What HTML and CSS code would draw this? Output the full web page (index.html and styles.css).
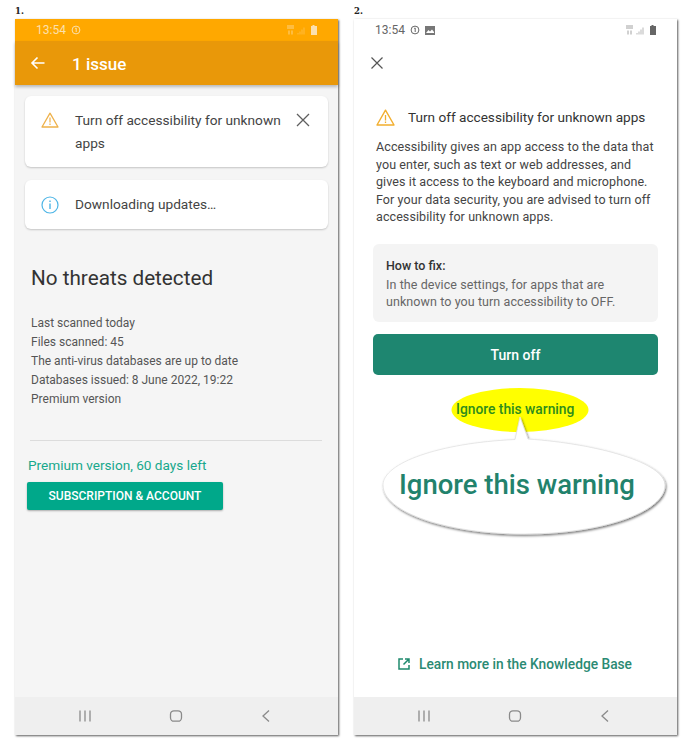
FILE: index.html
```html
<!DOCTYPE html>
<html lang="en">
<head>
    <meta charset="UTF-8">
    <title>Turn off accessibility for unknown apps</title>
    <link rel="stylesheet" href="styles.css">
</head>
<body>
    <div class="shots">
        <!-- screen 1 -->
        <div class="shot">
            <div class="label">1.</div>
            <div class="phone phone-grey">
                <div class="status status-orange">
                    <span class="time">13:54</span>
                    <svg class="st-icon" width="10" height="10" viewBox="0 0 10 10"><circle cx="5" cy="5" r="3.9" fill="none" stroke="currentColor"/><path d="M4.2 3.4 5.2 3V7" fill="none" stroke="currentColor"/></svg>
                    <span class="spacer"></span>
                    <svg class="st-right" width="31" height="10" viewBox="0 0 31 10"><path d="M0 1h7M0 3h7M2 5.500v4M5 5.500v4" stroke="currentColor" fill="none" opacity=".75"/><path d="M11 8v1.500M13 6.500v3M15 4.500v5M17 2.500v7" stroke="currentColor" fill="none" stroke-width=".8" opacity=".45"/><path d="M25.500 0h2v1H30v9h-6V1h1.500z" fill="currentColor"/></svg>
                </div>
                <div class="appbar">
                    <svg width="16" height="14" viewBox="0 0 16 14"><path d="M14.500 7H2M7.500 1.500 2 7l5.500 5.500" fill="none" stroke="#fff" stroke-width="1.600"/></svg>
                    <span class="appbar-title">1 issue</span>
                </div>
                <div class="content-1">
                    <div class="card card-issue">
                        <svg class="card-icon" width="18" height="16" viewBox="0 0 18 16"><path d="M9 1.200 17 15H1z" fill="none" stroke="#eeb14a" stroke-width="1.300" stroke-linejoin="round"/><path d="M9 5.500v5M9 11.500v1.500" stroke="#eeb14a" stroke-width="1.200"/></svg>
                        <div class="card-text">Turn off accessibility for unknown apps</div>
                        <svg class="card-close" width="14" height="14" viewBox="0 0 14 14"><path d="M1 1l12 12M13 1 1 13" stroke="#5f5f5f" stroke-width="1.300"/></svg>
                    </div>
                    <div class="card card-info">
                        <svg class="card-icon" width="18" height="18" viewBox="0 0 18 18"><circle cx="9" cy="9" r="8" fill="none" stroke="#4db5e6" stroke-width="1.200"/><path d="M9 7.500v5.500M9 4.500v1.600" stroke="#4db5e6" stroke-width="1.400"/></svg>
                        <div class="card-text">Downloading updates…</div>
                    </div>
                    <h2 class="headline">No threats detected</h2>
                    <ul class="facts">
                        <li>Last scanned today</li>
                        <li>Files scanned: 45</li>
                        <li>The anti-virus databases are up to date</li>
                        <li>Databases issued: 8 June 2022, 19:22</li>
                        <li>Premium version</li>
                    </ul>
                    <hr class="divider">
                    <div class="days-left">Premium version, 60 days left</div>
                    <a class="sub-btn">SUBSCRIPTION &amp; ACCOUNT</a>
                </div>
                <div class="navbar">
                    <svg width="14" height="14" viewBox="0 0 14 14"><path d="M2 1.500v11M7 1.500v11M12 1.500v11" stroke="#8a8a8a" stroke-width="1.300"/></svg>
                    <svg width="14" height="14" viewBox="0 0 14 14"><rect x="1.500" y="1.800" width="11" height="10.400" rx="3.500" fill="none" stroke="#8a8a8a" stroke-width="1.300"/></svg>
                    <svg width="14" height="14" viewBox="0 0 14 14"><path d="M10 1.500 4 7l6 5.500" fill="none" stroke="#8a8a8a" stroke-width="1.300"/></svg>
                </div>
            </div>
        </div>

        <!-- screen 2 -->
        <div class="shot">
            <div class="label">2.</div>
            <div class="phone">
                <div class="status">
                    <span class="time">13:54</span>
                    <svg class="st-icon" width="10" height="10" viewBox="0 0 10 10"><circle cx="5" cy="5" r="3.900" fill="none" stroke="currentColor"/><path d="M4.200 3.400 5.200 3V7" fill="none" stroke="currentColor"/></svg>
                    <svg class="st-icon" width="10" height="9" viewBox="0 0 10 9"><path d="M0 0h10v9H0z" fill="#777"/><path d="M1 7 3.500 4 5 5.500 7 3.500 9 6v1z" fill="#fff"/></svg>
                    <span class="spacer"></span>
                    <svg class="st-right" width="31" height="10" viewBox="0 0 31 10"><path d="M0 1h7M0 3h7M2 5.500v4M5 5.500v4" stroke="currentColor" fill="none" opacity=".6"/><path d="M11 8v1.500M13 6.500v3M15 4.500v5M17 2.500v7" stroke="currentColor" fill="none" stroke-width=".8" opacity=".6"/><path d="M25.500 0h2v1H30v9h-6V1h1.500z" fill="currentColor"/></svg>
                </div>
                <div class="closebar">
                    <svg width="12" height="12" viewBox="0 0 12 12"><path d="M.5.500l11 11M11.500.500l-11 11" stroke="#555" stroke-width="1.200"/></svg>
                </div>
                <div class="content-2">
                    <div class="warn-title">
                        <svg width="19" height="17" viewBox="0 0 19 17"><path d="M9.500 1.200 18 16H1z" fill="none" stroke="#f2ae2e" stroke-width="1.400" stroke-linejoin="round"/><path d="M9.500 6v5.500M9.500 12.500v1.500" stroke="#f2ae2e" stroke-width="1.300"/></svg>
                        <span>Turn off accessibility for unknown apps</span>
                    </div>
                    <p class="warn-body">Accessibility gives an app access to the data that you enter, such as text or web addresses, and gives it access to the keyboard and microphone. For your data security, you are advised to turn off accessibility for unknown apps.</p>
                    <div class="fix-box">
                        <div class="fix-title">How to fix:</div>
                        <div class="fix-text">In the device settings, for apps that are unknown to you turn accessibility to OFF.</div>
                    </div>
                    <a class="turn-off">Turn off</a>
                    <div class="ignore-small">Ignore this warning</div>
                    <div class="learn-more">
                        <svg width="12" height="12" viewBox="0 0 12 12"><path d="M5 1H1v10h10V7M7 1h4v4M11 1 5.500 6.500" fill="none" stroke="#1f8a6e" stroke-width="1.500"/></svg>
                        <span>Learn more in the Knowledge Base</span>
                    </div>
                </div>
                <div class="navbar">
                    <svg width="14" height="14" viewBox="0 0 14 14"><path d="M2 1.500v11M7 1.500v11M12 1.500v11" stroke="#8a8a8a" stroke-width="1.300"/></svg>
                    <svg width="14" height="14" viewBox="0 0 14 14"><rect x="1.500" y="1.800" width="11" height="10.400" rx="3.500" fill="none" stroke="#8a8a8a" stroke-width="1.300"/></svg>
                    <svg width="14" height="14" viewBox="0 0 14 14"><path d="M10 1.500 4 7l6 5.500" fill="none" stroke="#8a8a8a" stroke-width="1.300"/></svg>
                </div>

                <!-- callout drawn over the screenshot -->
                <div class="callout">
                    <svg class="callout-bg" width="323" height="160" viewBox="0 0 323 160">
                        <defs>
                            <filter id="soft" x="-5%" y="-5%" width="110%" height="115%">
                                <feDropShadow dx="1" dy="1.500" stdDeviation="1" flood-color="#000" flood-opacity=".55"/>
                            </filter>
                        </defs>
                        <ellipse cx="166" cy="22" rx="68.500" ry="22" fill="#ffff00"/>
                        <path d="M161 51.500 C 85 55 29 75 29 97 C 29 125 95 146 170 146 C 245 146 311 125 311 97 C 311 75 245 56 174 51 L166 29 Z" fill="#fff" stroke="#e2e2e2" stroke-width=".8" filter="url(#soft)"/>
                    </svg>
                    <span class="callout-big">Ignore this warning</span>
                </div>
            </div>
        </div>
    </div>
</body>
</html>
```

FILE: styles.css
```css
html, body {
    margin: 0;
    padding: 0;
    background-color: #fff;
}

body {
    font-family: Roboto, "Liberation Sans", sans-serif;
    width: 692px;
    height: 750px;
    overflow: hidden;
}

.shots {
    display: flex;
    gap: 16px;
    padding: 4px 0 0 15px;
}

.shot {
    width: 323px;
}

.label {
    font-family: "DejaVu Serif", serif;
    font-size: 8.500px;
    font-weight: bold;
    line-height: 14px;
    height: 15px;
    color: #222;
}

.phone {
    position: relative;
    width: 323px;
    height: 716px;
    display: flex;
    flex-direction: column;
    background-color: #fff;
    box-shadow: 1px 1px 2px rgba(0, 0, 0, 0.65);
}

.phone-grey {
    background-color: #f5f5f5;
}

.status {
    display: flex;
    align-items: center;
    gap: 5px;
    height: 22px;
    flex: none;
    padding: 0 20px 0 21px;
    color: #666;
}

.status-orange {
    background-color: #ffa800;
    color: #fbe0ae;
}

.time {
    font-size: 12px;
}

.spacer {
    flex: 1;
}

.appbar {
    display: flex;
    align-items: center;
    height: 44px;
    flex: none;
    padding-left: 15px;
    background-color: #e99809;
    box-shadow: 0 2px 3px rgba(0, 0, 0, 0.25);
    color: #fff;
}

.appbar-title {
    margin-left: 26px;
    font-size: 17px;
    font-weight: 500;
    padding-top: 1px;
}

.content-1 {
    flex: 1;
    padding: 11px 10px 0 10px;
}

.card {
    display: flex;
    background-color: #fff;
    border-radius: 6px;
    box-shadow: 0 1px 2px rgba(0, 0, 0, 0.2);
    color: #444;
    font-size: 13.700px;
    line-height: 23px;
}

.card-issue {
    height: 71px;
    padding: 13px 14px 0 16px;
    box-sizing: border-box;
    margin-bottom: 13px;
}

.card-info {
    height: 49px;
    align-items: center;
    padding-left: 16px;
}

.card-icon {
    flex: none;
    margin-right: 16px;
}

.card-issue .card-icon {
    margin-top: 3px;
}

.card-text {
    width: 212px;
}

.card-close {
    flex: none;
    margin: 4px 0 0 9px;
}

.headline {
    margin: 35px 0 0 6px;
    font-size: 20.700px;
    font-weight: 400;
    line-height: 28px;
    color: #333;
}

.facts {
    list-style: none;
    margin: 22px 0 0 6px;
    padding: 0;
    font-size: 12px;
    line-height: 19px;
    color: #555;
}

.divider {
    height: 1px;
    margin: 31px 6px 0 5px;
    border: none;
    background-color: #dcdcdc;
}

.days-left {
    margin: 15px 0 0 3px;
    font-size: 13.600px;
    line-height: 18px;
    color: #17a88c;
}

.sub-btn {
    display: block;
    width: 196px;
    height: 28px;
    margin: 8px 0 0 2px;
    border-radius: 2px;
    background-color: #00a88a;
    box-shadow: 0 1px 2px rgba(0, 0, 0, 0.3);
    color: #fff;
    font-size: 12px;
    font-weight: 500;
    line-height: 28px;
    text-align: center;
}

.navbar {
    display: flex;
    justify-content: space-between;
    align-items: center;
    height: 38px;
    flex: none;
    padding: 0 65px 0 63px;
    background-color: #efefef;
}

.closebar {
    height: 44px;
    flex: none;
    padding-left: 17px;
    display: flex;
    align-items: center;
}

.content-2 {
    flex: 1;
    padding: 0 19px;
    position: relative;
}

.warn-title {
    display: flex;
    align-items: center;
    gap: 13px;
    margin: 22px 0 0 3px;
    height: 20px;
    font-size: 13.600px;
    color: #333;
}

.warn-body {
    margin: 11px 0 0 3px;
    font-size: 12.500px;
    line-height: 17.500px;
    letter-spacing: 0.09px;
    color: #444;
}

.fix-box {
    margin-top: 18px;
    padding: 13px 13px 12px;
    height: 78px;
    box-sizing: border-box;
    border-radius: 6px;
    background-color: #f4f4f4;
    font-size: 12.500px;
    line-height: 17px;
}

.fix-title {
    font-weight: 500;
    color: #333;
    margin-bottom: 2px;
}

.fix-text {
    color: #666;
    letter-spacing: 0.08px;
}

.turn-off {
    display: block;
    height: 41px;
    margin-top: 12px;
    border-radius: 5px;
    background-color: #1e8670;
    color: #fff;
    font-size: 14px;
    font-weight: 500;
    line-height: 43px;
    text-align: center;
}

.ignore-small {
    position: relative;
    z-index: 2;
    margin-top: 25px;
    height: 18px;
    padding-left: 83px;
    font-size: 13.800px;
    font-weight: 500;
    line-height: 18px;
    color: #2d8d1c;
}

.learn-more {
    position: absolute;
    left: 44px;
    bottom: 25px;
    display: flex;
    align-items: center;
    gap: 9px;
    font-size: 13.750px;
    font-weight: 500;
    color: #2a8a73;
}

.callout {
    position: absolute;
    left: 0;
    top: 369px;
    width: 323px;
    height: 160px;
}

.callout-bg {
    display: block;
}

.callout-big {
    position: absolute;
    left: 45px;
    top: 79px;
    font-size: 27.500px;
    font-weight: 500;
    line-height: 36px;
    color: #22826c;
}
```
